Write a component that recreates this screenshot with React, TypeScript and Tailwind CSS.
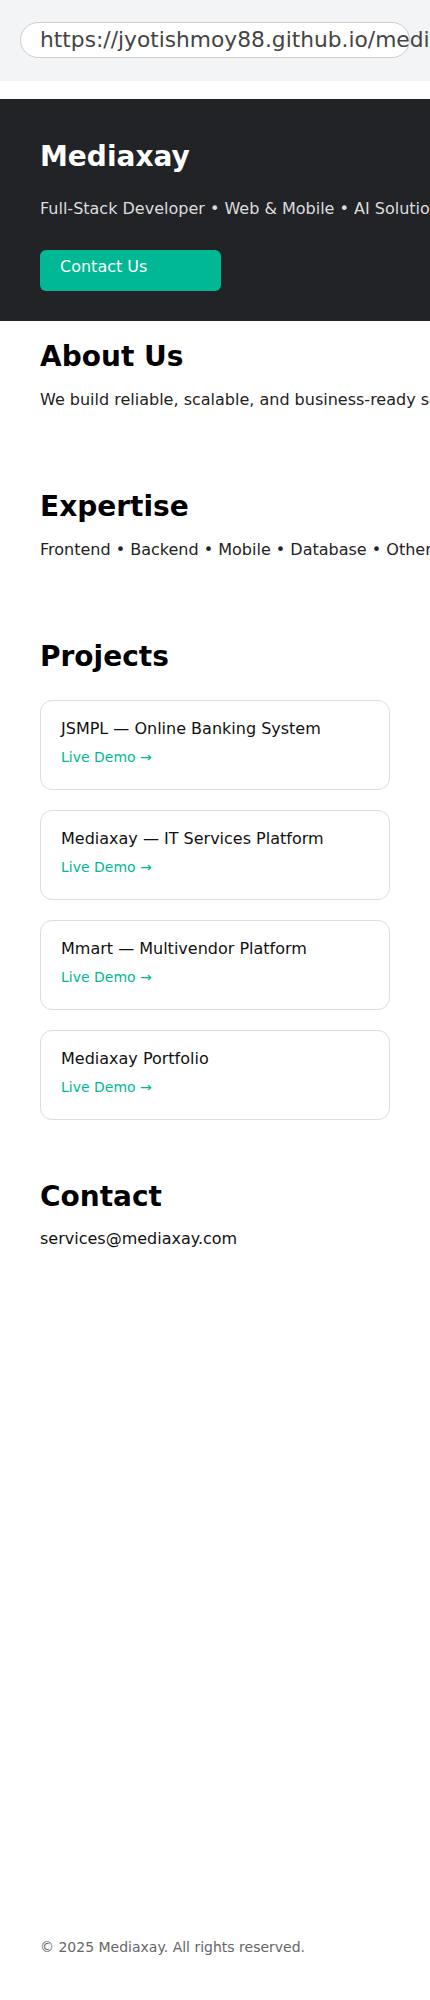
import React from 'react';

const projects = [
  'JSMPL — Online Banking System',
  'Mediaxay — IT Services Platform',
  'Mmart — Multivendor Platform',
  'Mediaxay Portfolio',
];

export default function App() {
  return (
    <div className="w-[430px] overflow-hidden bg-white font-['DejaVu_Sans',sans-serif] whitespace-nowrap">
      {/* fake browser bar */}
      <div className="h-[81px] bg-[#f3f4f6] pt-[22px] pl-5">
        <div className="h-9 w-[390px] rounded-full border border-[#cccccc] bg-white pl-[19px] text-[21.75px] leading-[34px] text-[#444444]">
          <span className="relative">https://jyotishmoy88.github.io/mediaxay/</span>
        </div>
      </div>

      {/* hero */}
      <header className="mt-[18px] bg-[#222327] px-10 pt-[41px] pb-[30px]">
        <h1 className="text-[28px] font-bold leading-[34px] text-white">Mediaxay</h1>
        <p className="mt-[23px] text-base leading-6 text-[#dddddd]">
          Full-Stack Developer • Web &amp; Mobile • AI Solutions
        </p>
        <a className="mt-[29px] block h-[41px] w-[181px] rounded-md bg-[#00b894] pl-5 pt-[5px] text-base leading-6 text-white">
          Contact Us
        </a>
      </header>

      <section className="px-10 pt-[19px]">
        <h2 className="text-[28px] font-bold leading-[34px] text-black">About Us</h2>
        <p className="mt-[14px] text-base leading-6 text-[#222222]">
          We build reliable, scalable, and business-ready software solutions.
        </p>
      </section>

      <section className="px-10 pt-[78px]">
        <h2 className="text-[28px] font-bold leading-[34px] text-black">Expertise</h2>
        <p className="mt-[14px] text-base leading-6 text-[#222222]">
          Frontend • Backend • Mobile • Database • Other
        </p>
      </section>

      <section className="px-10 pt-[78px]">
        <h2 className="text-[28px] font-bold leading-[34px] text-black">Projects</h2>
        <div className="mt-[26px] flex flex-col gap-5">
          {projects.map((p) => (
            <div key={p} className="rounded-xl border border-[#dddddd] bg-white px-5 pt-4 pb-[21px]">
              <h3 className="text-base leading-6 text-[#111111]">{p}</h3>
              <a className="mt-[6px] block text-sm leading-[21px] text-[#00b894]">Live Demo →</a>
            </div>
          ))}
        </div>
      </section>

      <section className="px-10 pt-[60px]">
        <h2 className="text-[28px] font-bold leading-[34px] text-black">Contact</h2>
        <p className="mt-[13px] text-base leading-6 text-[#111111]">services@mediaxay.com</p>
      </section>

      <footer className="mt-[686px] px-10 pb-10 text-sm leading-[21px] text-[#666666]">
        © 2025 Mediaxay. All rights reserved.
      </footer>
    </div>
  );
}
